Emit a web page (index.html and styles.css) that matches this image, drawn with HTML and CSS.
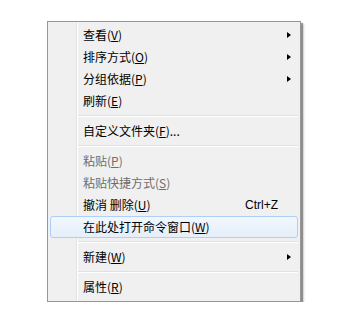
FILE: index.html
```html
<!DOCTYPE html>
<html>
<head>
<meta charset="utf-8">
<link rel="stylesheet" href="styles.css">
</head>
<body>
<div class="menu">
  <div class="item sub"><span class="label">查看(<u>V</u>)</span></div>
  <div class="item sub"><span class="label">排序方式(<u>O</u>)</span></div>
  <div class="item sub"><span class="label">分组依据(<u>P</u>)</span></div>
  <div class="item"><span class="label">刷新(<u>E</u>)</span></div>
  <div class="sep"></div>
  <div class="item"><span class="label">自定义文件夹(<u>F</u>)...</span></div>
  <div class="sep"></div>
  <div class="item disabled"><span class="label">粘贴(<u>P</u>)</span></div>
  <div class="item disabled"><span class="label">粘贴快捷方式(<u>S</u>)</span></div>
  <div class="item"><span class="label">撤消 删除(<u>U</u>)</span><span class="key">Ctrl+Z</span></div>
  <div class="item hover"><span class="label">在此处打开命令窗口(<u>W</u>)</span></div>
  <div class="sep"></div>
  <div class="item sub"><span class="label">新建(<u>W</u>)</span></div>
  <div class="sep"></div>
  <div class="item"><span class="label">属性(<u>R</u>)</span></div>
</div>
</body>
</html>
```
FILE: styles.css
```css
html, body {
  margin: 0;
  padding: 0;
  background: #ffffff;
}
body {
  padding: 21px 0 0 47px;
  font-family: "Noto Sans CJK SC", "Microsoft YaHei", sans-serif;
  font-size: 12px;
  color: #000;
}
.menu {
  width: 252px;
  border: 1px solid #979797;
  padding: 2px 0 3px;
  background:
    linear-gradient(to right, transparent 28px, #e2e3e3 28px, #e2e3e3 29px, #ffffff 29px, #ffffff 30px, transparent 30px),
    #f0f0f0;
  box-shadow: 2px 2px 1px rgba(0,0,0,0.35), 3px 3px 2px rgba(0,0,0,0.15);
}
.item {
  position: relative;
  height: 22px;
  margin: 0 2px;
  padding: 0 18px 0 33px;
  display: flex;
  align-items: center;
  justify-content: space-between;
  line-height: 22px;
  border: 1px solid transparent;
  border-left: 0;
  border-right: 0;
  box-sizing: border-box;
}
.item u {
  text-decoration: underline;
  text-underline-offset: 1px;
}
.label {
  white-space: nowrap;
}
.key {
  font-family: "Liberation Sans", Arial, sans-serif;
  font-size: 12px;
  margin-right: 2px;
}
.disabled {
  color: #6d6d6d;
}
.sub::after {
  content: "";
  position: absolute;
  right: 7px;
  top: 7px;
  border-left: 4px solid #000;
  border-top: 3.5px solid transparent;
  border-bottom: 3.5px solid transparent;
}
.hover {
  border: 1px solid #aecff7;
  border-radius: 3px;
  background: linear-gradient(to bottom, #f2f7fd, #e5eefa);
  padding-left: 32px;
  margin: 0 2px 0 2px;
}
.sep {
  height: 8px;
  margin-left: 30px;
  margin-right: 2px;
  background: linear-gradient(to bottom, transparent 3px, #e0e0e0 3px, #e0e0e0 4px, #ffffff 4px, #ffffff 5px, transparent 5px);
}
```
